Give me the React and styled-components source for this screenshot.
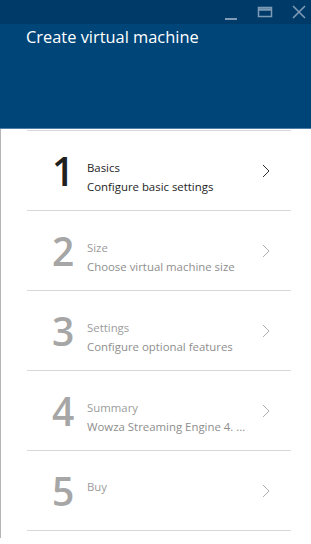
import React from "react";
import styled, { createGlobalStyle } from "styled-components";

const Global = createGlobalStyle`
  html, body {
    margin: 0;
    padding: 0;
    background: #ffffff;
  }
  body {
    font-family: "Open Sans", "Noto Sans", sans-serif;
  }
`;

const Window = styled.div`
  width: 311px;
  height: 544px;
  display: flex;
  flex-direction: column;
  overflow: hidden;
`;

const Header = styled.div`
  height: 128px;
  background: #004578;
  border-bottom: 1px solid #4f7ea6;
  display: flex;
  flex-direction: column;
`;

const TitleBar = styled.div`
  height: 24px;
  background: #003a69;
  display: flex;
  justify-content: flex-end;
  align-items: center;
  padding-right: 4px;
  gap: 18px;
`;

const Control = styled.svg`
  width: 16px;
  height: 16px;
  stroke: #7e9bb6;
  fill: none;
`;

const Title = styled.h1`
  margin: 2px 0 0 26px;
  font-size: 16.4px;
  font-weight: 400;
  color: #ffffff;
  line-height: 22px;
`;

const Panel = styled.div`
  height: 408px;
  border-left: 1px solid #b5b5b5;
  padding: 1px 20px 0 26px;
`;

const Row = styled.div`
  height: 79px;
  border-top: 1px solid #d8d8d8;
  display: flex;
  align-items: center;
  padding-left: 25px;
  &:last-child {
    border-bottom: 1px solid #d8d8d8;
  }
`;

const Number = styled.div`
  width: 35px;
  font-size: 39px;
  font-weight: 600;
  line-height: 40px;
  color: ${(p) => (p.active ? "#202020" : "#a6a6a6")};
`;

const Text = styled.div`
  flex: 1;
  font-size: 11.4px;
  line-height: 19px;
  margin-top: ${(p) => (p.single ? "-8px" : "12px")};
`;

const Step = styled.div`
  color: ${(p) => (p.active ? "#1e1e1e" : "#9c9c9c")};
`;

const Sub = styled.div`
  color: ${(p) => (p.active ? "#1e1e1e" : "#8e8e8e")};
  white-space: nowrap;
`;

const Chevron = styled.svg`
  width: 10px;
  height: 14px;
  margin-right: 20px;
  stroke: ${(p) => (p.active ? "#333" : "#b0b0b0")};
  fill: none;
`;

const steps = [
  { n: 1, title: "Basics", sub: "Configure basic settings", active: true },
  { n: 2, title: "Size", sub: "Choose virtual machine size" },
  { n: 3, title: "Settings", sub: "Configure optional features" },
  { n: 4, title: "Summary", sub: "Wowza Streaming Engine 4. ..." },
  { n: 5, title: "Buy" },
];

export default function App() {
  return (
    <Window>
      <Global />
      <Header>
        <TitleBar>
          <Control viewBox="0 0 16 16" strokeWidth="2">
            <path d="M2 15h12" />
          </Control>
          <Control viewBox="0 0 16 16" strokeWidth="1.5">
            <rect x="1.5" y="3.5" width="13" height="9" />
            <path d="M1.5 5.5h13" strokeWidth="2.5" />
          </Control>
          <Control viewBox="0 0 16 16" strokeWidth="1.6">
            <path d="M2 2l12 12M14 2L2 14" />
          </Control>
        </TitleBar>
        <Title>Create virtual machine</Title>
      </Header>
      <Panel>
        {steps.map((s) => (
          <Row key={s.n}>
            <Number active={s.active}>{s.n}</Number>
            <Text single={!s.sub}>
              <Step active={s.active}>{s.title}</Step>
              {s.sub && <Sub active={s.active}>{s.sub}</Sub>}
            </Text>
            <Chevron viewBox="0 0 10 14" strokeWidth="1" active={s.active}>
              <path d="M2 1l6 6-6 6" />
            </Chevron>
          </Row>
        ))}
      </Panel>
    </Window>
  );
}
